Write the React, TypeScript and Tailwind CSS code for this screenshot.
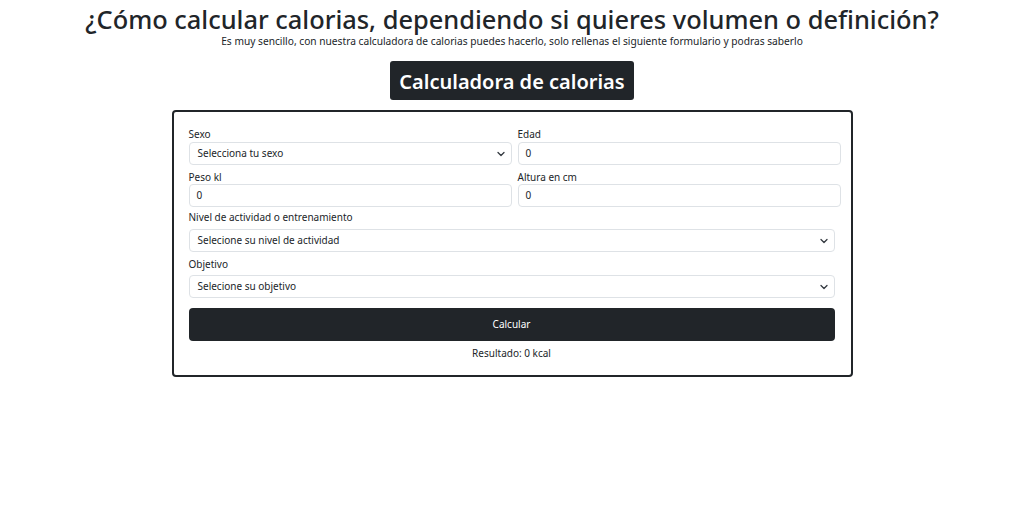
import React from "react";

const Chevron = () => (
  <svg width="10" height="8" viewBox="0 0 16 16" className="shrink-0">
    <path d="M2 5l6 6 6-6" fill="none" stroke="#343a40" strokeWidth="2.6" strokeLinecap="round" strokeLinejoin="round" />
  </svg>
);

const SelectBox = ({ text, className = "" }: { text: string; className?: string }) => (
  <div className={`flex h-[23px] items-center justify-between rounded-[4px] border border-[#dee2e6] bg-white pl-[8px] pr-[5px] text-[10px] text-[#212529] ${className}`}>
    <span>{text}</span>
    <Chevron />
  </div>
);

const InputBox = ({ value }: { value: string }) => (
  <div className="flex h-[23px] items-center rounded-[4px] border border-[#dee2e6] bg-white pl-[7px] text-[10px] text-[#212529]">
    {value}
  </div>
);

export default function App() {
  return (
    <div
      className="flex w-[1024px] h-[512px] flex-col items-center bg-white text-[#212529]"
      style={{ fontFamily: '"Noto Sans", "Open Sans", sans-serif' }}
    >
      <h1 className="mt-[4px] text-[25.4px] leading-[30px] font-medium">
        ¿Cómo calcular calorias, dependiendo si quieres volumen o definición?
      </h1>
      <p className="mt-[1px] text-[10.2px] leading-[12px]">
        Es muy sencillo, con nuestra calculadora de calorias puedes hacerlo, solo rellenas el siguiente formulario y podras saberlo
      </p>
      <div className="mt-[14px] flex h-[39px] w-[244px] items-center justify-center rounded-[3px] bg-[#212529] pt-[3px] text-[20px] font-semibold text-white">
        Calculadora de calorias
      </div>
      <div className="mt-[10px] w-[681px] rounded-[4px] border-2 border-[#212529] pl-[15px] pr-[16px] pt-[15px] pb-[15px]">
        <div className="mr-[-6px] grid grid-cols-2 gap-x-[6px]">
          <div className="flex flex-col">
            <label className="text-[10px] leading-[14px]">Sexo</label>
            <div className="mt-[1px]"><SelectBox text="Selecciona tu sexo" /></div>
          </div>
          <div className="flex flex-col">
            <label className="text-[10px] leading-[14px]">Edad</label>
            <div className="mt-[1px]"><InputBox value="0" /></div>
          </div>
          <div className="mt-[5px] flex flex-col">
            <label className="text-[10px] leading-[14px]">Peso kl</label>
            <div><InputBox value="0" /></div>
          </div>
          <div className="mt-[5px] flex flex-col">
            <label className="text-[10px] leading-[14px]">Altura en cm</label>
            <div><InputBox value="0" /></div>
          </div>
        </div>
        <div className="flex flex-col">
          <label className="mt-[3px] text-[10px] leading-[14px]">Nivel de actividad o entrenamiento</label>
          <SelectBox className="mt-[5px]" text="Selecione su nivel de actividad" />
          <label className="mt-[5px] text-[10px] leading-[14px]">Objetivo</label>
          <SelectBox className="mt-[4px]" text="Selecione su objetivo" />
          <button className="mt-[10px] flex h-[33px] items-center justify-center rounded-[4px] bg-[#212529] text-[10px] text-white">
            Calcular
          </button>
          <p className="mt-[5px] text-center text-[10px] leading-[14px]">Resultado: 0 kcal</p>
        </div>
      </div>
    </div>
  );
}
